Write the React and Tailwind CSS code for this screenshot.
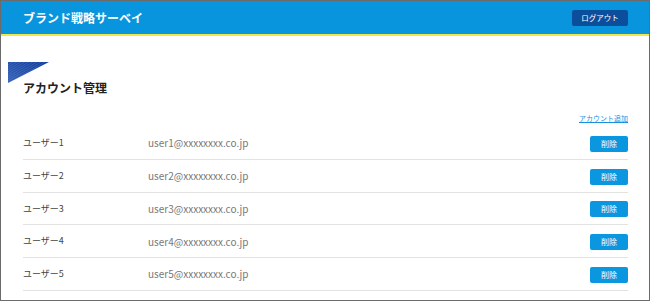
import React from "react";

const users = [1, 2, 3, 4, 5];

export default function App() {
  return (
    <div
      className="w-[650px] h-[301px] border border-[#6b6b6b] bg-white overflow-hidden"
      style={{ fontFamily: '"Noto Sans CJK JP", "Noto Sans", sans-serif' }}
    >
      <header className="h-[35px] bg-[#0995dd] border-b-2 border-[#f0e84a] flex items-center justify-between pl-[22px] pr-[21px]">
        <h1 className="text-white text-[12px] font-bold leading-none">ブランド戦略サーベイ</h1>
        <button className="w-[56px] h-[16px] bg-[#0b4f9c] rounded-[2px] text-white text-[7.5px] leading-none flex items-center justify-center">
          ログアウト
        </button>
      </header>

      <div className="pt-[26px] pl-[7px] pr-[21px]">
        <svg width="41" height="21" viewBox="0 0 41 21" className="block">
          <defs>
            <linearGradient id="g" x1="0" y1="1" x2="1" y2="0">
              <stop offset="0" stopColor="#3460b8" />
              <stop offset="1" stopColor="#0a3a9a" />
            </linearGradient>
            <pattern id="p" width="2" height="2" patternUnits="userSpaceOnUse" patternTransform="rotate(-30)">
              <rect width="2" height="1" fill="rgba(255,255,255,0.12)" />
            </pattern>
          </defs>
          <polygon points="0,0 41,0 0,21" fill="url(#g)" />
          <polygon points="0,0 41,0 0,21" fill="url(#p)" />
        </svg>
        <div className="pl-[15px]">
          <h2 className="text-[12px] font-bold text-[#222] leading-none -mt-[1px]">アカウント管理</h2>
        </div>
        <div className="pl-[15px]">
          <div className="flex justify-end mt-[21px]">
            <a href="#" className="text-[7px] text-[#1a8fe0] underline leading-none">アカウント追加</a>
          </div>
          <div className="mt-[5px]">
            {users.map((n) => (
              <div key={n} className="h-[32.75px] border-b border-[#e2e2e2] flex items-center">
                <div className="w-[125px] text-[9px] text-[#444]">ユーザー{n}</div>
                <div className="flex-1 text-[10px] text-[#777]">user{n}@xxxxxxxx.co.jp</div>
                <button className="w-[38px] h-[16px] mt-[2px] bg-[#0b97e0] rounded-[2px] text-white text-[8px] leading-none flex items-center justify-center">
                  削除
                </button>
              </div>
            ))}
          </div>
        </div>
      </div>
    </div>
  );
}
